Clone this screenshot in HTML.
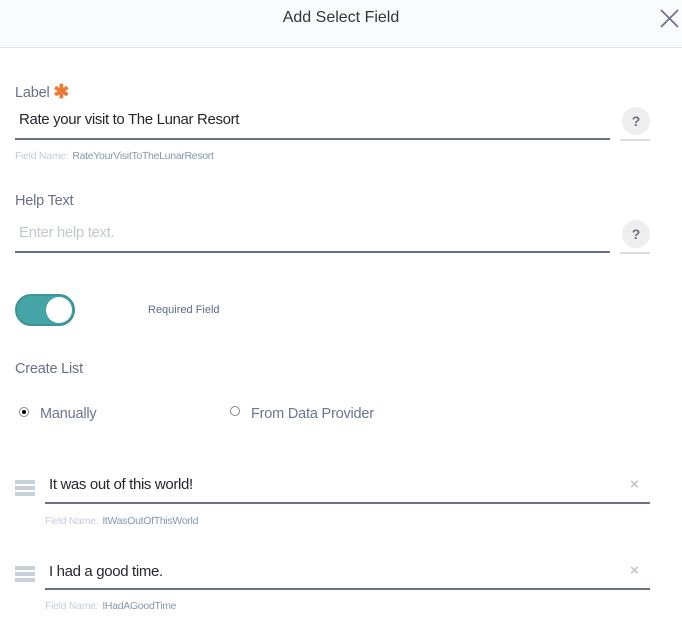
<!DOCTYPE html>
<html><head><style>
*{margin:0;padding:0;box-sizing:border-box}
body{width:682px;height:617px;background:#fff;font-family:"Liberation Sans",sans-serif;position:relative;overflow:hidden}
.a{position:absolute;white-space:nowrap}
.hdr{position:absolute;left:0;top:0;width:682px;height:48px;background:#fafbfd;border-bottom:1px solid #e3e5ea}
.lbl{font-size:14.5px;color:#6b7089;letter-spacing:-0.2px}
.val{font-size:15px;color:#26282e;letter-spacing:-0.35px}
.ul{position:absolute;height:2px;background:#6b7089}
.fn{font-size:10.5px;letter-spacing:-0.3px}
.fn span{color:#c6ced9}
.fn b{font-weight:normal;color:#8797b0;margin-left:4px}
.q{position:absolute;width:28px;height:28px;border-radius:50%;background:#eeeeee;color:#6d6f78;font-weight:bold;font-size:14px;text-align:center;line-height:28px}
.qu{position:absolute;height:2px;width:30px;background:#dcdcdc}
.ham{position:absolute;width:20px}
.ham i{display:block;height:3.5px;background:#c8d0da;margin-bottom:2.5px}
.x{position:absolute;color:#c4c4c4;font-size:15px;font-weight:bold}
</style></head><body>
<div class="hdr"></div>
<div class="a" style="left:0;width:682px;text-align:center;top:9px;font-size:16px;color:#33353d">Add Select Field</div>
<svg class="a" style="left:660px;top:9px" width="19" height="19" viewBox="0 0 19 19"><path d="M1 1L18 18M18 1L1 18" stroke="#6b7089" stroke-width="1.6" fill="none"/></svg>

<div class="a lbl" style="left:15px;top:80px">Label <span style="color:#ec7a35;font-size:19px;font-weight:bold;position:relative;top:1px">✱</span></div>
<div class="a val" style="left:19px;top:111px">Rate your visit to The Lunar Resort</div>
<div class="ul" style="left:15px;top:138px;width:595px"></div>
<div class="q" style="left:622px;top:107px">?</div><div class="qu" style="left:620px;top:139px"></div>
<div class="a fn" style="left:15px;top:150px"><span>Field Name:</span><b>RateYourVisitToTheLunarResort</b></div>

<div class="a lbl" style="left:15px;top:193px">Help Text</div>
<div class="a val" style="left:19px;top:224px;color:#c3c7cf">Enter help text.</div>
<div class="ul" style="left:15px;top:251px;width:595px"></div>
<div class="q" style="left:622px;top:220px">?</div><div class="qu" style="left:620px;top:252px"></div>

<div class="a" style="left:15px;top:294px;width:60px;height:32px;border-radius:16px;background:#45a4a6;border:2px solid #3d9395"></div>
<div class="a" style="left:46px;top:297px;width:26px;height:26px;border-radius:50%;background:#fff"></div>
<div class="a" style="left:148px;top:304px;font-size:11px;color:#5d6a8a">Required Field</div>

<div class="a lbl" style="left:15px;top:361px">Create List</div>
<div class="a" style="left:19px;top:407px;width:10px;height:10px;border-radius:50%;border:1px solid #888;background:#fff"></div>
<div class="a" style="left:22px;top:410px;width:4px;height:4px;border-radius:50%;background:#000"></div>
<div class="a lbl" style="left:40px;top:406px;color:#6b7695">Manually</div>
<div class="a" style="left:230px;top:406px;width:10px;height:10px;border-radius:50%;border:1px solid #888;background:#fff"></div>
<div class="a lbl" style="left:251px;top:406px;color:#6b7695">From Data Provider</div>

<div class="ham" style="left:15px;top:480px"><i></i><i></i><i></i></div>
<div class="a val" style="left:49px;top:476px">It was out of this world!</div>
<div class="x" style="left:630px;top:476px">×</div>
<div class="ul" style="left:45px;top:502px;width:605px"></div>
<div class="a fn" style="left:45px;top:515px"><span>Field Name:</span><b>ItWasOutOfThisWorld</b></div>

<div class="ham" style="left:15px;top:566px"><i></i><i></i><i></i></div>
<div class="a val" style="left:49px;top:563px">I had a good time.</div>
<div class="x" style="left:630px;top:562px">×</div>
<div class="ul" style="left:45px;top:588px;width:605px"></div>
<div class="a fn" style="left:45px;top:600px"><span>Field Name:</span><b>IHadAGoodTime</b></div>
</body></html>
